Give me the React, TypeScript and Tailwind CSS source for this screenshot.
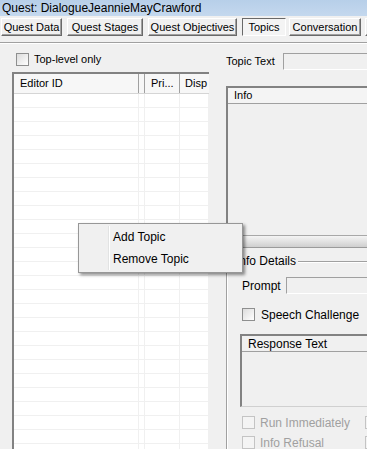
import React from 'react';

const tabs = [
  { label: 'Quest Data', cls: 'ml-[1px] w-[61px]' },
  { label: 'Quest Stages', cls: 'ml-[5px] w-[76px]' },
  { label: 'Quest Objectives', cls: 'ml-[5px] w-[89px]' },
  { label: 'Topics', cls: 'ml-[5px] w-[44px]', active: true },
  { label: 'Conversation', cls: 'ml-[3px] w-[72px]' },
  { label: '', cls: 'ml-[4px] w-[50px]' },
];

const Check = ({ disabled }: { disabled?: boolean }) => (
  <div
    className={
      disabled
        ? 'w-[13px] h-[13px] shrink-0 border border-[#c4c4c4] bg-[#f4f4f4]'
        : 'w-[13px] h-[13px] shrink-0 border border-[#8e8f8f] bg-gradient-to-br from-[#dcdcdc] to-white'
    }
  />
);

const App: React.FC = () => {
  const rows = Array.from({ length: 26 });

  return (
    <div className="relative w-[367px] h-[449px] overflow-hidden bg-[#f0f0f0] text-black text-[11px] font-['Liberation_Sans',Arial,sans-serif]">
      {/* title */}
      <div className="h-[16px] pl-[2px] bg-gradient-to-b from-[#b7cfe9] to-[#c4d8ee] text-[12px] leading-[16px] whitespace-nowrap">
        Quest: DialogueJeannieMayCrawford
      </div>

      {/* tab buttons */}
      <div className="flex mt-[2px] h-[18px] whitespace-nowrap">
        {tabs.map((t, i) => (
          <div
            key={i}
            className={
              t.active
                ? `${t.cls} shrink-0 h-[18px] flex items-center justify-center pt-[1px] bg-[#f4f4f4] border border-t-[#696969] border-l-[#696969] border-r-white border-b-white leading-none`
                : `${t.cls} shrink-0 h-[18px] flex items-center justify-center bg-[#f0f0f0] border border-t-white border-l-white border-r-[#696969] border-b-[#696969] shadow-[inset_-1px_-1px_0_#a0a0a0] leading-none`
            }
          >
            {t.label}
          </div>
        ))}
      </div>

      <div className="mt-[6px] h-[2px] border-t border-t-[#a0a0a0] border-b border-b-white" />

      <div className="flex">
        {/* left column */}
        <div className="w-[226px] shrink-0">
          <div className="mt-[9px] ml-[16px] flex items-center gap-[5px] h-[13px]">
            <Check />
            <span className="leading-none">Top-level only</span>
          </div>

          <div className="mt-[6px] ml-[12px] w-[197px] h-[400px] border-l-2 border-t-2 border-l-[#828282] border-t-[#828282] bg-white">
            <div className="flex h-[20px] border-b border-b-[#d5d5d5] bg-[#f7f7f7]">
              <div className="w-[125px] pl-[6px] flex items-center border-r border-r-[#a0a0a0]">Editor ID</div>
              <div className="w-[6px] border-r border-r-[#a0a0a0]" />
              <div className="w-[35px] pl-[6px] flex items-center border-r border-r-[#a0a0a0]">Pri...</div>
              <div className="flex-1 pl-[5px] flex items-center overflow-hidden">Disp</div>
            </div>
            {rows.map((_, i) => (
              <div key={i} className="flex h-[14px] border-b border-b-[#f0f0f0]">
                <div className="w-[125px] border-r border-r-[#f0f0f0]" />
                <div className="w-[6px] border-r border-r-[#f0f0f0]" />
                <div className="w-[35px] border-r border-r-[#f0f0f0]" />
                <div className="flex-1 border-r border-r-[#f0f0f0]" />
              </div>
            ))}
          </div>
        </div>

        {/* right column */}
        <div className="w-[300px] shrink-0">
          <div className="mt-[9px] flex items-center h-[17px]">
            <span className="w-[57px]">Topic Text</span>
            <div className="flex-1 h-[17px] bg-[#f0f0f0] border border-t-[#a0a0a0] border-l-[#a0a0a0] border-r-white border-b-white" />
          </div>

          <div className="mt-[16px] h-[162px] border-l-2 border-t-2 border-l-[#828282] border-t-[#828282] bg-[#f0f0f0] flex flex-col">
            <div className="h-[16px] pl-[6px] flex items-center border-b border-b-[#a0a0a0] bg-[#f4f4f4]">Info</div>
            <div className="flex-1" />
            <div className="h-[13px] bg-gradient-to-b from-[#f4f4f4] via-[#e2e2e2] to-[#cfcfcf] border-t border-t-[#a8a8a8] border-b border-b-[#9b9b9b]" />
          </div>

          {/* Info Details group */}
          <div className="relative mt-[13px] h-[200px] border-l border-t border-l-[#a0a0a0] border-t-[#a0a0a0] shadow-[inset_1px_1px_0_white]">
            <span className="absolute -top-[7px] left-[7px] px-[2px] bg-[#f0f0f0] leading-[13px] text-[12px]">Info Details</span>
            <div className="pl-[15px] pt-[15px]">
              <div className="flex items-center h-[17px]">
                <span className="w-[44px] text-[12px]">Prompt</span>
                <div className="flex-1 h-[17px] border border-t-[#a0a0a0] border-l-[#a0a0a0] border-r-white border-b-white" />
              </div>
              <div className="mt-[14px] flex items-center gap-[6px] h-[13px]">
                <Check />
                <span className="text-[12px] leading-none">Speech Challenge</span>
              </div>
              <div className="mt-[13px] -ml-[2px] h-[73px] border-l-2 border-t-2 border-l-[#828282] border-t-[#828282] border-b border-b-[#d0d0d0]">
                <div className="h-[16px] pl-[6px] flex items-center border-b border-b-[#a0a0a0] text-[12px]">Response Text</div>
              </div>
              <div className="mt-[9px] flex items-center h-[13px]">
                <div className="w-[123px] flex items-center gap-[5px]">
                  <Check disabled />
                  <span className="text-[12px] text-[#a0a0a0] leading-none">Run Immediately</span>
                </div>
                <Check disabled />
              </div>
              <div className="mt-[7px] flex items-center h-[13px]">
                <div className="w-[123px] flex items-center gap-[5px]">
                  <Check disabled />
                  <span className="text-[12px] text-[#a0a0a0] leading-none">Info Refusal</span>
                </div>
                <Check disabled />
              </div>
            </div>
          </div>
        </div>
      </div>

      {/* context menu */}
      <div className="absolute left-[78px] top-[223px] w-[165px] h-[50px] bg-[#f0f0f0] border border-[#979797] shadow-[2px_2px_3px_rgba(0,0,0,0.45)] text-[12px] py-[2px]">
        <div className="absolute left-[29px] top-[2px] bottom-[2px] w-[2px] border-l border-l-[#e2e3e3] border-r border-r-white" />
        <div className="h-[22px] pl-[34px] flex items-center">Add Topic</div>
        <div className="h-[22px] pl-[34px] flex items-center">Remove Topic</div>
      </div>
    </div>
  );
};

export default App;
